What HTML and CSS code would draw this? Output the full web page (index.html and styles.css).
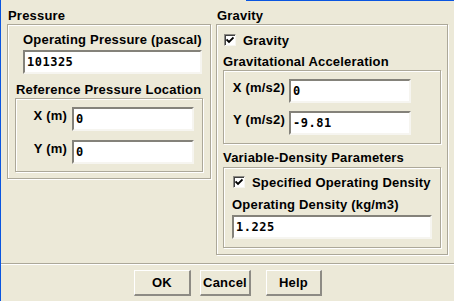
FILE: index.html
```html
<!DOCTYPE html>
<html>
<head>
<meta charset="utf-8">
<link rel="stylesheet" href="styles.css">
</head>
<body>
<div class="frame">
  <div class="panels">
    <section class="group pressure">
      <div class="gtitle">Pressure</div>
      <div class="box pbox">
        <div class="lbl l-op">Operating Pressure (pascal)</div>
        <div class="field f-op">101325</div>
        <div class="lbl l-ref">Reference Pressure Location</div>
        <div class="box refbox">
          <div class="row"><span class="rl rl-m">X (m)</span><div class="field f-xy">0</div></div>
          <div class="row row2"><span class="rl rl-m">Y (m)</span><div class="field f-xy">0</div></div>
        </div>
      </div>
    </section>
    <section class="group gravity">
      <div class="gtitle">Gravity</div>
      <div class="box gbox">
        <div class="chkrow chk-grav"><span class="chk"><svg width="8" height="8" viewBox="0 0 8 8"><path d="M0.5 3.5 L3 6 L7.5 1.5" fill="none" stroke="#000" stroke-width="1.8"/></svg></span><span class="lbl">Gravity</span></div>
        <div class="lbl l-ga">Gravitational Acceleration</div>
        <div class="box accbox">
          <div class="row"><span class="rl rl-ms">X (m/s2)</span><div class="field f-xy">0</div></div>
          <div class="row row2b"><span class="rl rl-ms">Y (m/s2)</span><div class="field f-xy">-9.81</div></div>
        </div>
        <div class="lbl l-vd">Variable-Density Parameters</div>
        <div class="box vdbox">
          <div class="chkrow"><span class="chk"><svg width="8" height="8" viewBox="0 0 8 8"><path d="M0.5 3.5 L3 6 L7.5 1.5" fill="none" stroke="#000" stroke-width="1.8"/></svg></span><span class="lbl">Specified Operating Density</span></div>
          <div class="lbl l-od">Operating Density (kg/m3)</div>
          <div class="field f-od">1.225</div>
        </div>
      </div>
    </section>
  </div>
  <div class="sep"></div>
  <div class="buttons">
    <button class="btn b-ok">OK</button>
    <button class="btn b-cancel">Cancel</button>
    <button class="btn b-help">Help</button>
  </div>
</div>
</body>
</html>
```
FILE: styles.css
```css
html, body {
  margin: 0;
  padding: 0;
}
body {
  width: 454px;
  height: 301px;
  background: #ece9d8;
  overflow: hidden;
  font-family: "Liberation Sans", Arial, sans-serif;
  font-weight: bold;
  font-size: 13px;
  line-height: 15px;
  letter-spacing: 0.2px;
  color: #000;
}
.frame {
  height: 301px;
  border-left: 1px solid #0a55e0;
  background-image: linear-gradient(to right, transparent 245px, #0a55e0 245px);
  background-size: 100% 1px;
  background-repeat: no-repeat;
}
.panels {
  display: flex;
  align-items: flex-start;
  gap: 5px;
  padding: 8px 0 0 6px;
  height: 247px;
}
.gtitle {
  padding-left: 1px;
  height: 15px;
  margin-bottom: 1px;
  white-space: nowrap;
}
.box {
  border: 1px solid #aca899;
  box-shadow: 1px 1px 0 #fff, inset 1px 1px 0 #fff;
}
.lbl {
  white-space: nowrap;
  height: 15px;
}
.field {
  box-sizing: border-box;
  height: 24px;
  background: #fff;
  border: 2px solid;
  border-color: #84827a #f6f5f0 #f6f5f0 #84827a;
  font-family: "DejaVu Sans Mono", monospace;
  font-weight: bold;
  font-size: 12px;
  letter-spacing: 0.5px;
  line-height: 20px;
  padding-left: 2px;
  white-space: nowrap;
}

/* pressure */
.pressure { width: 204px; }
.pbox {
  box-sizing: border-box;
  height: 155px;
  padding: 7px 7px 0 7px;
}
.l-op { margin-left: 8px; }
.f-op {
  margin: 3px 0 0 8px;
  width: 179px;
}
.l-ref { margin: 8px 0 0 1px; }
.refbox {
  box-sizing: border-box;
  height: 74px;
  margin-top: 1px;
  padding-top: 8px;
}
.row {
  display: flex;
  align-items: flex-start;
}
.row2 { margin-top: 9px; }
.row2b { margin-top: 8px; }
.rl {
  white-space: nowrap;
  text-align: right;
  flex: none;
  padding-top: 1px;
}
.rl-m { width: 51px; margin-right: 5px; }
.rl-ms { width: 61px; margin-right: 4px; }
.f-xy { width: 122px; }

/* gravity */
.gravity { width: 232px; }
.gbox {
  box-sizing: border-box;
  height: 231px;
  padding: 8px 6px 0 6px;
}
.chkrow {
  display: flex;
  align-items: flex-start;
  height: 15px;
  padding-left: 1px;
}
.chk {
  box-sizing: border-box;
  width: 12px;
  height: 12px;
  margin-top: 1px;
  margin-right: 7px;
  background: #fff;
  border: 1px solid;
  border-color: #8d8b84 #f6f5f0 #f6f5f0 #8d8b84;
  box-shadow: inset 1px 1px 0 #404040;
  display: flex;
  align-items: center;
  justify-content: center;
}
.chk svg { display: block; }
.l-ga { margin-top: 6px; }
.accbox {
  box-sizing: border-box;
  height: 74px;
  margin-top: 1px;
  padding-top: 8px;
}
.l-vd { margin-top: 6px; }
.vdbox {
  box-sizing: border-box;
  height: 81px;
  margin-top: 2px;
  padding: 7px 0 0 8px;
}
.l-od { margin-top: 7px; }
.f-od {
  margin-top: 3px;
  width: 200px;
}

/* separator and buttons */
.sep {
  margin-top: 8px;
  border-top: 1px solid #aca899;
  border-bottom: 1px solid #fff;
}
.buttons {
  display: flex;
  padding: 5px 0 0 133px;
}
.btn {
  box-sizing: border-box;
  height: 26px;
  margin: 0;
  padding: 0;
  background: #ece9d8;
  border-style: solid;
  border-width: 1px 2px 2px 1px;
  border-color: #fff #8d8b84 #8d8b84 #fff;
  font-family: "Liberation Sans", Arial, sans-serif;
  font-weight: bold;
  font-size: 13px;
  letter-spacing: 0.2px;
  color: #000;
}
.b-ok { width: 57px; }
.b-cancel { width: 51px; margin-left: 9px; }
.b-help { width: 56px; margin-left: 15px; }
```
